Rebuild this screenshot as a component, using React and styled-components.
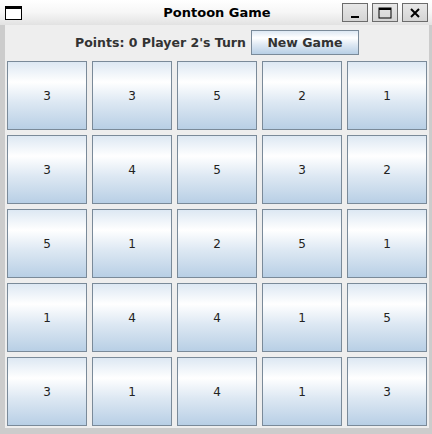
import React from "react";
import styled, { createGlobalStyle } from "styled-components";

const Global = createGlobalStyle`
  html, body { margin: 0; padding: 0; background: #cccccc; }
  * { box-sizing: border-box; }
`;

const Frame = styled.div`
  width: 432px;
  height: 434px;
  display: flex;
  flex-direction: column;
  background: #cccccc;
  font-family: "DejaVu Sans", sans-serif;
`;

const TitleBar = styled.div`
  height: 25px;
  flex: none;
  display: flex;
  align-items: center;
  padding: 0 4px 0 5px;
  background: linear-gradient(to bottom, #ffffff 0%, #f6f6f6 50%, #e2e2e2 100%);
`;

const TitleText = styled.div`
  flex: 1;
  text-align: center;
  font-weight: bold;
  font-size: 13px;
  color: #000;
  padding-left: 70px;
`;

const WinButtons = styled.div`
  display: flex;
  gap: 4px;
`;

const WinButton = styled.div`
  width: 26px;
  height: 19px;
  border: 1px solid #6c6c6c;
  background: linear-gradient(to bottom, #e8e8e8, #d4d4d4);
  display: flex;
  align-items: center;
  justify-content: center;
`;

const Body = styled.div`
  flex: 1;
  display: flex;
  flex-direction: column;
  margin: 0 3px 6px 5px;
  background: #eeeeee;
`;

const TopPanel = styled.div`
  height: 36px;
  flex: none;
  display: flex;
  align-items: center;
  justify-content: center;
  gap: 5px;
  padding-bottom: 1px;
`;

const Label = styled.span`
  font-size: 12.5px;
  font-weight: bold;
  color: #333333;
`;

const MetalButton = styled.button`
  font-family: "DejaVu Sans", sans-serif;
  font-size: 12px;
  font-weight: bold;
  color: #333333;
  border: 1px solid #7a8a99;
  background: linear-gradient(
    to bottom,
    #dde8f3 0%,
    #ffffff 30%,
    #dde8f3 60%,
    #b8cfe5 100%
  );
  padding: 0;
  margin: 0;
  display: flex;
  align-items: center;
  justify-content: center;
  cursor: default;
`;

const NewGame = styled(MetalButton)`
  width: 108px;
  height: 25px;
  font-size: 12.5px;
`;

const Grid = styled.div`
  flex: 1;
  display: grid;
  grid-template-columns: repeat(5, 80px);
  grid-template-rows: repeat(5, 69px);
  gap: 5px;
  padding: 0 2px 2px 2px;
`;

const Cell = styled(MetalButton)`
  width: 80px;
  height: 69px;
  font-weight: normal;
  font-size: 12px;
  color: #222;
`;

const board = [
  [3, 3, 5, 2, 1],
  [3, 4, 5, 3, 2],
  [5, 1, 2, 5, 1],
  [1, 4, 4, 1, 5],
  [3, 1, 4, 1, 3],
];

export default function App() {
  return (
    <>
      <Global />
      <Frame>
        <TitleBar>
          <svg width="17" height="14" viewBox="0 0 17 14">
            <rect x="0.5" y="0.5" width="16" height="13" fill="#fff" stroke="#000" />
            <rect x="0" y="0" width="17" height="3" fill="#000" />
          </svg>
          <TitleText>Pontoon Game</TitleText>
          <WinButtons>
            <WinButton>
              <svg width="12" height="12" viewBox="0 0 12 12">
                <rect x="2" y="9" width="8" height="2" fill="#000" />
              </svg>
            </WinButton>
            <WinButton>
              <svg width="14" height="12" viewBox="0 0 14 12">
                <rect x="1" y="1" width="12" height="10" fill="none" stroke="#000" strokeWidth="1" />
                <rect x="1" y="1" width="12" height="2" fill="#000" />
              </svg>
            </WinButton>
            <WinButton>
              <svg width="12" height="12" viewBox="0 0 12 12">
                <path d="M2 2 L10 10 M10 2 L2 10" stroke="#000" strokeWidth="2" />
              </svg>
            </WinButton>
          </WinButtons>
        </TitleBar>
        <Body>
          <TopPanel>
            <Label>Points: 0 Player 2's Turn</Label>
            <NewGame>New Game</NewGame>
          </TopPanel>
          <Grid>
            {board.flat().map((n, i) => (
              <Cell key={i}>{n}</Cell>
            ))}
          </Grid>
        </Body>
      </Frame>
    </>
  );
}
